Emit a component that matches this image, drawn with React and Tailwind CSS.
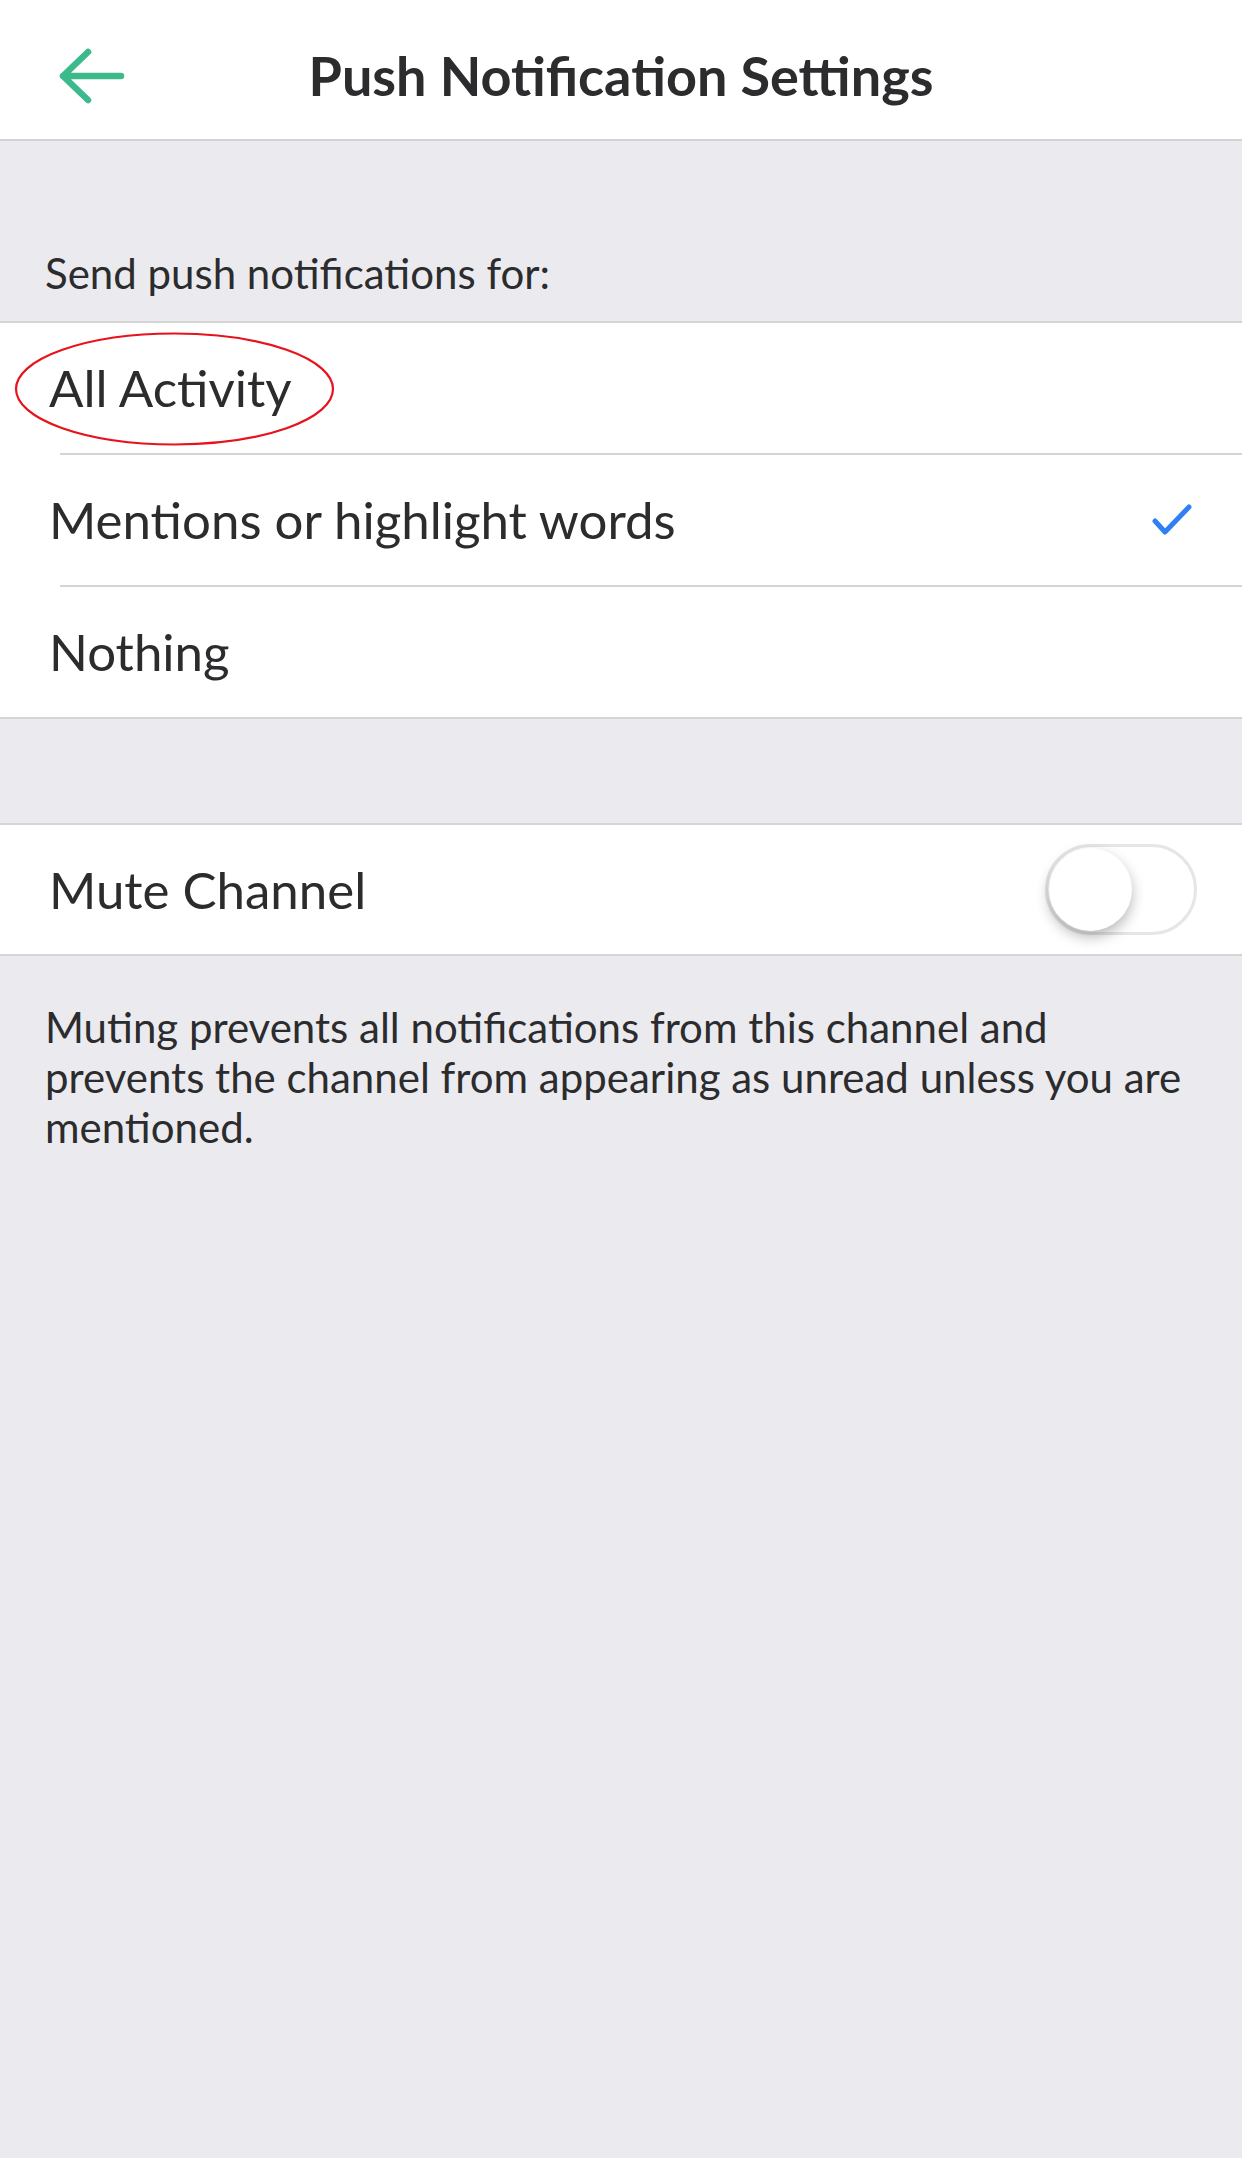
import React from "react";

const font = { fontFamily: "Lato, 'Open Sans', sans-serif" };

const BackArrow = () => (
  <svg width="71" height="60" viewBox="56 46 71 60" fill="none">
    <path
      d="M121 76 H63 M88 52 L63 76 L88 100"
      stroke="#3dba8c"
      strokeWidth="6.5"
      strokeLinecap="round"
      strokeLinejoin="round"
    />
  </svg>
);

const Check = () => (
  <svg width="40" height="32" viewBox="0 0 40 32" fill="none">
    <path d="M3 17 L13 28 L37 3" stroke="#2f80f5" strokeWidth="5" strokeLinecap="round" strokeLinejoin="round" />
  </svg>
);

const Divider = () => <div className="ml-[60px] h-[2px] bg-[#d5d5d8]" />;

const Row = ({ label, checked }) => (
  <div className="flex h-[130px] items-center justify-between pl-[49px] pr-[50px]">
    <span className="text-[51px] leading-[52px] text-[#2c2c2e]">{label}</span>
    {checked && <Check />}
  </div>
);

const Toggle = () => (
  <div className="relative h-[91px] w-[152px] rounded-full border-[3px] border-[#e6e6e6] bg-white">
    <div className="absolute left-[1px] top-[1px] h-[83px] w-[83px] rounded-full bg-white shadow-[0_6px_14px_rgba(0,0,0,0.28)]" />
  </div>
);

export default function App() {
  return (
    <div className="min-h-[2158px] w-full bg-[#ebebef]" style={font}>
      {/* Header */}
      <div className="grid h-[141px] grid-cols-[1fr_auto_1fr] items-center border-b-2 border-[#d3d3d6] bg-white pt-[12px]">
        <div className="pl-[56px]">
          <BackArrow />
        </div>
        <h1 className="text-[54px] font-bold leading-[54px] text-[#2c2c2e]">Push Notification Settings</h1>
        <div />
      </div>

      {/* Section title */}
      <div className="flex h-[180px] items-end px-[45px] pb-[27px]">
        <span className="text-[42px] leading-[42px] text-[#2c2c2e]">Send push notifications for:</span>
      </div>

      {/* Options */}
      <div className="relative border-y-2 border-[#d5d5d8] bg-white">
        <Row label="All Activity" />
        <Divider />
        <Row label="Mentions or highlight words" checked />
        <Divider />
        <Row label="Nothing" />
        <svg className="absolute left-0 top-0" width="360" height="140" viewBox="0 0 360 140" fill="none">
          <ellipse cx="174.5" cy="66" rx="158.5" ry="55.5" stroke="#e8121c" strokeWidth="2.2" />
        </svg>
      </div>

      <div className="h-[104px]" />

      {/* Mute */}
      <div className="flex h-[133px] items-center justify-between border-y-2 border-[#d5d5d8] bg-white pl-[49px] pr-[45px]">
        <span className="text-[51px] leading-[52px] text-[#2c2c2e]">Mute Channel</span>
        <Toggle />
      </div>

      <p className="pl-[45px] pr-[40px] pt-[46px] text-[42px] leading-[50px] text-[#2c2c2e]">
        Muting prevents all notifications from this channel and prevents the channel from appearing as unread unless you are mentioned.
      </p>
    </div>
  );
}
